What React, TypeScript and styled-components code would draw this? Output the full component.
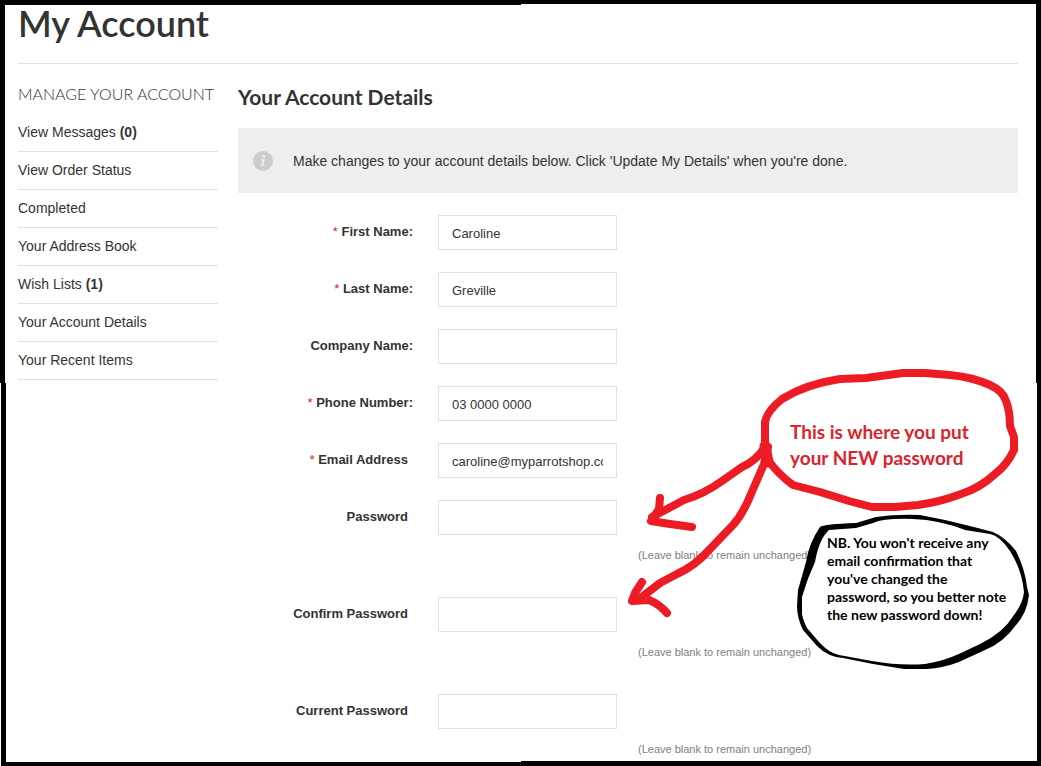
import React from 'react';
import styled, { createGlobalStyle } from 'styled-components';

const GlobalStyle = createGlobalStyle`
  *, *::before, *::after { box-sizing: border-box; }
  body {
    margin: 0;
    background: #fff;
    color: #333;
    font-family: "Liberation Sans", Arial, sans-serif;
    font-size: 14px;
  }
`;

const Page = styled.div`
  position: relative;
  min-height: 100vh;
  padding: 4px 23px 9px 18px;
`;

const Header = styled.header`
  height: 60px;
  border-bottom: 1px solid #e2e2e2;
`;

const Title = styled.h1`
  margin: 0;
  font: 600 36px/38px Lato, sans-serif;
`;

const Columns = styled.div`
  display: grid;
  grid-template-columns: 200px minmax(0, 1fr);
  gap: 20px;
`;

const Sidebar = styled.nav`
  padding-top: 20px;
`;

const SidebarTitle = styled.h2`
  margin: 0 0 10px;
  font: 300 16px/20px Lato, sans-serif;
  white-space: nowrap;
  text-transform: uppercase;
`;

const MenuList = styled.ul`
  margin: 0;
  padding: 0;
  list-style: none;
`;

const MenuItem = styled.li`
  padding: 9px 0 10px;
  border-bottom: 1px solid #e2e2e2;
  line-height: 18px;
`;

const MenuLink = styled.a`
  color: inherit;
  text-decoration: none;
`;

const Main = styled.main`
  padding-top: 21px;
`;

const SectionTitle = styled.h2`
  margin: 0 0 19px;
  font: 700 21px/24px Lato, sans-serif;
`;

const Notice = styled.p`
  display: flex;
  align-items: center;
  gap: 20px;
  margin: 0 0 22px;
  padding: 23px 15px 22px;
  background: #eee;
  line-height: 20px;
`;

const Form = styled.form`
  display: grid;
  gap: 22px;
`;

const Field = styled.div`
  display: grid;
  grid-template-columns: 200px 179px 1fr;
`;

const Label = styled.label<{ $inset: boolean }>`
  padding-right: ${(p) => (p.$inset ? 30 : 25)}px;
  font-size: 13px;
  font-weight: 700;
  line-height: 34px;
  text-align: right;
`;

const Required = styled.span`
  color: #d0252c;
  font-weight: 400;
`;

const TextBox = styled.input`
  width: 100%;
  height: 35px;
  padding: 2px 13px 0;
  border: 1px solid #e2e2e2;
  background: #fff;
  color: #333;
  font: 13px "Liberation Sans", Arial, sans-serif;
`;

const Hint = styled.small`
  grid-column: 3;
  grid-row: 2;
  padding: 12px 0 0 21px;
  color: #808080;
  font-size: 11px;
  line-height: 16px;

  ${Field}:not(:last-child) > & {
    margin-bottom: 12px;
  }
`;

const Frame = styled.div`
  position: absolute;
  inset: 0;
  display: grid;
  grid-template-columns: 1fr 1fr;
  grid-template-rows: 1fr 1fr;
  pointer-events: none;
`;

const Corner = styled.div<{ $widths: string; $indent?: number }>`
  margin-left: ${(p) => p.$indent ?? 0}px;
  border: 0 solid #000;
  border-width: ${(p) => p.$widths};
`;

const Scribbles = styled.svg`
  position: absolute;
  top: 360px;
  left: 620px;
  pointer-events: none;
`;

const Callout = styled.p<{ $top: number; $left: number; $large?: boolean }>`
  position: absolute;
  top: ${(p) => p.$top}px;
  left: ${(p) => p.$left}px;
  margin: 0;
  color: ${(p) => (p.$large ? '#d9242b' : '#000')};
  font: 700 ${(p) => (p.$large ? '19px/26px' : '14px/18px')} Lato, sans-serif;
  white-space: nowrap;
`;

const menu = [
  { label: 'View Messages', count: 0 },
  { label: 'View Order Status' },
  { label: 'Completed' },
  { label: 'Your Address Book' },
  { label: 'Wish Lists', count: 1 },
  { label: 'Your Account Details' },
  { label: 'Your Recent Items' },
];

const fields = [
  { id: 'first-name', label: 'First Name:', value: 'Caroline', required: true },
  { id: 'last-name', label: 'Last Name:', value: 'Greville', required: true },
  { id: 'company', label: 'Company Name:' },
  { id: 'phone', label: 'Phone Number:', value: '03 0000 0000', required: true },
  { id: 'email', label: 'Email Address', value: 'caroline@myparrotshop.com', required: true },
  { id: 'password', label: 'Password', secret: true },
  { id: 'confirm', label: 'Confirm Password', secret: true },
  { id: 'current', label: 'Current Password', secret: true },
];

const InfoIcon = () => (
  <svg width="20" height="20" viewBox="0 0 20 20" aria-hidden="true">
    <circle cx="10" cy="10" r="10" fill="#ccc" />
    <circle cx="10.7" cy="5.4" r="1.4" fill="#f4f4f4" />
    <path d="M8 8.2h3.6l-1.3 5.6h1.4l-.2 1H7.7l.2-1h.6l1-4.6H7.8z" fill="#f4f4f4" />
  </svg>
);

const Annotations = () => (
  <>
    <Scribbles width="415" height="315" viewBox="620 360 415 315" aria-hidden="true">
      <g fill="none" stroke="#ed1c24" strokeWidth="8" strokeLinecap="round" strokeLinejoin="round">
        <path d="M765 442L765 422Q767 411 782 399Q806 384 840 379L866 378L903 373L925 373L950 375Q972 377 990 385Q1003 391 1006 401Q1010 411 1010 426L1014 437L1014 450Q1007 465 995 474Q980 488 961 494Q940 502 918 505L895 507L872 507L849 501L820 492L793 485Q779 475 768 460Z" />
        <path d="M765 447Q756 461 742 467L722 481Q704 494 684 500L652 517" />
        <path d="M660 498L659 509L651 521L670 524L692 527" />
        <path d="M768 447L764 464L751 494Q743 514 733 525L709 550Q695 566 677 574L660 583L638 600" />
        <path d="M642 582L635 593L632 601L649 600Q659 604 667 613" />
        <path d="M765 446L768 462" strokeWidth="11" />
      </g>
      <path
        fill="#000"
        fillRule="evenodd"
        d="M820 527Q824 524 856 523L876 517Q896 514 920 515L945 520L970 526L993 532Q1005 537 1016 551Q1025 569 1027 587L1029 595Q1027 613 1016 625Q1003 643 985 650L959 662Q943 668 927 669L904 669L873 664L843 658Q828 657 817 646L803 630Q797 618 797 606L798 590L806 562Q809 543 820 527ZM829 530Q819 539 815 562Q807 579 802 597L802 614Q803 620 807 628L819 642Q829 653 839 655L872 661Q900 666 925 664Q944 661 961 653L980 644Q1003 633 1014 615Q1023 603 1024 592Q1022 570 1010 551Q1000 536 990 534L965 530Q940 520 913 519Q884 518 873 523L856 528Z"
      />
    </Scribbles>
    <Callout $top={419} $left={790} $large>
      This is where you put
      <br />
      your NEW password
    </Callout>
    <Callout $top={534} $left={827}>
      NB. You won't receive any
      <br />
      email confirmation that
      <br />
      you've changed the
      <br />
      password, so you better note
      <br />
      the new password down!
    </Callout>
  </>
);

export default function App() {
  return (
    <Page>
      <GlobalStyle />
      <Header>
        <Title>My Account</Title>
      </Header>
      <Columns>
        <Sidebar>
          <SidebarTitle>Manage your account</SidebarTitle>
          <MenuList>
            {menu.map(({ label, count }) => (
              <MenuItem key={label}>
                <MenuLink href="#">
                  {label}
                  {count !== undefined && <b> ({count})</b>}
                </MenuLink>
              </MenuItem>
            ))}
          </MenuList>
        </Sidebar>
        <Main>
          <SectionTitle>Your Account Details</SectionTitle>
          <Notice>
            <InfoIcon />
            Make changes to your account details below. Click 'Update My Details' when you're done.
          </Notice>
          <Form>
            {fields.map(({ id, label, value, required, secret }) => (
              <Field key={id}>
                <Label htmlFor={id} $inset={!label.endsWith(':')}>
                  {required && <Required>* </Required>}
                  {label}
                </Label>
                <TextBox id={id} type={secret ? 'password' : 'text'} defaultValue={value} />
                {secret && <Hint>(Leave blank to remain unchanged)</Hint>}
              </Field>
            ))}
          </Form>
        </Main>
      </Columns>
      <Annotations />
      <Frame>
        <Corner $widths="5px 0 0 5px" />
        <Corner $widths="4px 5px 0 0" />
        <Corner $widths="0 0 4px 5px" $indent={1} />
        <Corner $widths="0 4px 5px 0" />
      </Frame>
    </Page>
  );
}
